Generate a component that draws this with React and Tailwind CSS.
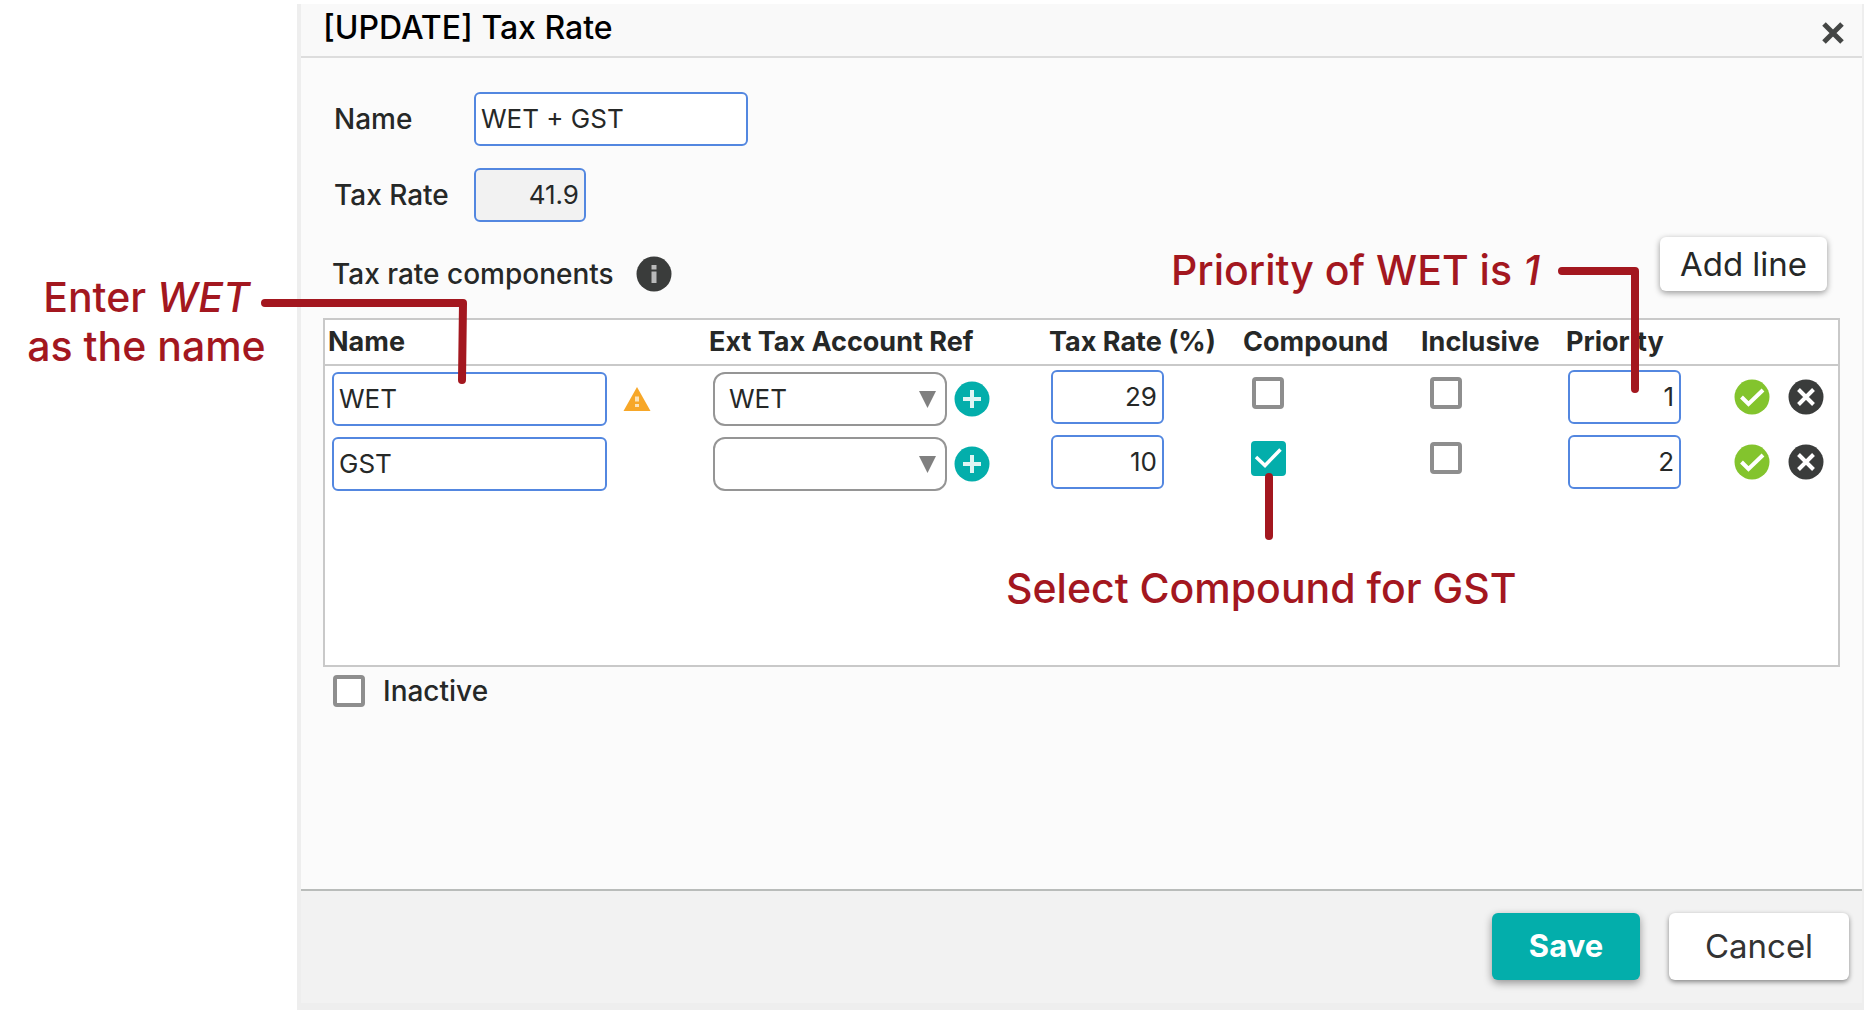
import { useState } from 'react';

const initialLines = [
  { id: 1, name: 'WET', warning: true, account: 'WET', rate: '29', compound: false, inclusive: false, priority: '1' },
  { id: 2, name: 'GST', warning: false, account: '', rate: '10', compound: true, inclusive: false, priority: '2' },
];

const inputClass = 'h-[54px] rounded-md border-2 border-[#5387e0] bg-white px-[5px] pb-[2px] text-[#262827] outline-none';

const WarningIcon = () => (
  <svg className="h-6 w-7" viewBox="0 0 28 24" role="img" aria-label="Warning">
    <path d="M14 0 27.500 24H.5z" fill="#f7a728" />
    <path d="M14 9.500v5M14 17v3" stroke="#fce3b8" strokeWidth="4" />
  </svg>
);

const InfoIcon = () => (
  <svg className="size-9" viewBox="0 0 36 36" role="img" aria-label="Info">
    <circle cx="18" cy="18" r="17.500" fill="#3a3c3b" />
    <path d="M18 9v4.500M18 15.500v11.500" stroke="#b9baba" strokeWidth="5" />
  </svg>
);

const PlusIcon = () => (
  <svg className="size-9" viewBox="0 0 36 36" aria-hidden="true">
    <circle cx="18" cy="18" r="17.500" fill="#03aeab" />
    <path d="M18 9v18M9 18h18" stroke="#dff5f4" strokeWidth="4" />
  </svg>
);

const AcceptIcon = () => (
  <svg className="size-9" viewBox="0 0 36 36" aria-hidden="true">
    <circle cx="18" cy="18" r="17.500" fill="#83c42d" />
    <path d="m7.500 18 7 7L29 11" fill="none" stroke="#fff" strokeWidth="4" />
  </svg>
);

const RemoveIcon = () => (
  <svg className="size-9" viewBox="0 0 36 36" aria-hidden="true">
    <circle cx="18" cy="18" r="17.500" fill="#3a3c3b" />
    <path d="m10.500 10.500 15 15m0-15-15 15" stroke="#fff" strokeWidth="4" />
  </svg>
);

const Checkbox = ({ id, label, checked, onChange }) => (
  <span className="relative flex size-9 items-center justify-center">
    <input
      id={id}
      type="checkbox"
      aria-label={label}
      checked={checked}
      onChange={onChange}
      className="peer size-8 appearance-none rounded-sm border-4 border-[#8e8e8e] bg-white checked:size-[35px] checked:border-[#03aeab] checked:bg-[#03aeab]"
    />
    <svg className="pointer-events-none absolute hidden size-9 peer-checked:block" viewBox="0 0 36 36" aria-hidden="true">
      <path d="m6 17 9 8.500L30.500 9.500" fill="none" stroke="#fff" strokeWidth="3.500" />
    </svg>
  </span>
);

const AccountSelect = ({ label, value, onChange }) => (
  <span className="relative flex">
    <select
      aria-label={label}
      value={value}
      onChange={onChange}
      className="h-[54px] w-[234px] appearance-none rounded-xl border-2 border-[#959595] bg-white pl-[14px] text-[#262827] outline-none"
    >
      <option value=""></option>
      <option value="WET">WET</option>
    </select>
    <svg className="pointer-events-none absolute right-[11px] top-[19px] h-[17px] w-[17px]" viewBox="0 0 17 17" aria-hidden="true">
      <path d="M0 0h17L8.500 17z" fill="#808080" />
    </svg>
  </span>
);

// Callout text and the strokes that lead to the fields
const Callouts = () => (
  <div className="pointer-events-none absolute inset-0 text-[41px] leading-[49px] font-medium text-[#a3171f]">
    <p className="absolute left-[1171px] top-[246px] whitespace-nowrap">
      Priority of WET is <em>1</em>
    </p>
    <p className="absolute left-[1006px] top-[564px] whitespace-nowrap">Select Compound for GST</p>
    <svg className="absolute left-0 top-0 h-[600px] w-[1700px]" viewBox="0 0 1700 600" aria-hidden="true">
      <g fill="none" stroke="#a3171f" strokeWidth="8" strokeLinecap="round" strokeLinejoin="round">
        <path d="M265 303h198l-1 77" />
        <path d="M1562 271h73v118" />
        <path d="M1269 477v59" />
      </g>
    </svg>
  </div>
);

export default function App() {
  const [name, setName] = useState('WET + GST');
  const [inactive, setInactive] = useState(false);
  const [lines, setLines] = useState(initialLines);

  const update = (id, field, value) => {
    setLines(lines.map(line => (line.id === id ? { ...line, [field]: value } : line)));
  };

  const addLine = () => {
    setLines([
      ...lines,
      { id: Date.now(), name: '', warning: false, account: '', rate: '', compound: false, inclusive: false, priority: String(lines.length + 1) },
    ]);
  };

  return (
    <div className="relative flex min-h-screen bg-white pt-1 pr-3 pb-2 font-['Inter',sans-serif] text-[26px] leading-9 text-[#262827]">
      <aside className="w-[297px] shrink-0 pt-[269px] pr-1 text-center text-[41px] leading-[49px] font-medium text-[#a3171f]">
        <p>
          Enter <em>WET</em>
          <br />
          as the name
        </p>
      </aside>

      <main className="flex min-w-0 flex-1 flex-col border-r-2 border-b-[7px] border-l-4 border-[#eeeeee] bg-[#fbfbfb]">
        <header className="flex h-[54px] items-center justify-between border-b-2 border-[#dddddd] bg-[#f9f9f9] pr-[18px] pl-[22px]">
          <h1 className="pb-1 text-[32px] font-medium text-black">[UPDATE] Tax Rate</h1>
          <button type="button" aria-label="Close" className="pt-[6px]">
            <svg className="size-[22px]" viewBox="0 0 22 22" aria-hidden="true">
              <path d="m2 2 18 18m0-18L2 20" stroke="#444645" strokeWidth="5" />
            </svg>
          </button>
        </header>

        <section className="flex-1 px-[22px] pt-[34px]">
          <div className="flex flex-col gap-[22px] pl-[11px]">
            <div className="flex items-center">
              <label htmlFor="tax-name" className="w-[140px] text-[28px] font-medium">Name</label>
              <input
                id="tax-name"
                className={`${inputClass} w-[274px]`}
                value={name}
                onChange={e => setName(e.target.value)}
              />
            </div>
            <div className="flex items-center">
              <label htmlFor="tax-rate" className="w-[140px] text-[28px] font-medium">Tax Rate</label>
              <input
                id="tax-rate"
                className="h-[54px] w-28 rounded-md border-2 border-[#5387e0] bg-[#f2f2f2] px-[5px] pb-[2px] text-right outline-none"
                value="41.9"
                readOnly
              />
            </div>
          </div>

          <div className="mt-[15px] mb-[26px] flex items-end justify-between pr-[13px] pl-[9px]">
            <div className="flex items-center gap-[22px]">
              <h2 className="text-[28px] font-medium">Tax rate components</h2>
              <InfoIcon />
            </div>
            <button
              type="button"
              onClick={addLine}
              className="mb-px h-[54px] w-[167px] rounded-md bg-white text-[33px] shadow-[0_2px_6px_rgba(0,0,0,0.4)]"
            >
              Add line
            </button>
          </div>

          <div className="min-h-[349px] border-2 border-[#c9c9c9] bg-white">
            <table className="w-full table-fixed border-collapse">
              <colgroup>
                <col />
                <col className="w-[338px]" />
                <col className="w-[196px]" />
                <col className="w-[178px]" />
                <col className="w-[143px]" />
                <col className="w-[153px]" />
                <col className="w-[124px]" />
              </colgroup>
              <thead>
                <tr className="h-[45px] border-b-2 border-[#c9c9c9] text-left text-[27px] whitespace-nowrap">
                  <th className="pl-[3px] font-bold">Name</th>
                  <th className="pl-[3px] font-bold">Ext Tax Account Ref</th>
                  <th className="pl-[5px] font-bold">Tax Rate (%)</th>
                  <th className="pl-[3px] font-bold">Compound</th>
                  <th className="pl-[3px] font-bold">Inclusive</th>
                  <th className="pl-[5px] font-bold">Priority</th>
                  <th aria-label="Actions"></th>
                </tr>
              </thead>
              <tbody>
                {lines.map(line => (
                  <tr key={line.id} className="h-[66px] align-top">
                    <td className="pt-[6px] pl-[7px]">
                      <div className="flex items-center gap-4">
                        <input
                          aria-label="Name"
                          className={`${inputClass} w-[275px]`}
                          value={line.name}
                          onChange={e => update(line.id, 'name', e.target.value)}
                        />
                        {line.warning && <WarningIcon />}
                      </div>
                    </td>
                    <td className="pt-[6px] pl-[7px]">
                      <div className="flex items-center gap-[7px]">
                        <AccountSelect
                          label="Ext Tax Account Ref"
                          value={line.account}
                          onChange={e => update(line.id, 'account', e.target.value)}
                        />
                        <button type="button" aria-label="Add account"><PlusIcon /></button>
                      </div>
                    </td>
                    <td className="pt-1 pl-[7px]">
                      <input
                        aria-label="Tax Rate (%)"
                        className={`${inputClass} block w-[113px] text-right`}
                        value={line.rate}
                        onChange={e => update(line.id, 'rate', e.target.value)}
                      />
                    </td>
                    <td className="pt-[9px] pl-[10px]">
                      <Checkbox
                        label="Compound"
                        checked={line.compound}
                        onChange={e => update(line.id, 'compound', e.target.checked)}
                      />
                    </td>
                    <td className="pt-[9px] pl-[10px]">
                      <Checkbox
                        label="Inclusive"
                        checked={line.inclusive}
                        onChange={e => update(line.id, 'inclusive', e.target.checked)}
                      />
                    </td>
                    <td className="pt-1 pl-[7px]">
                      <input
                        aria-label="Priority"
                        className={`${inputClass} block w-[113px] text-right`}
                        value={line.priority}
                        onChange={e => update(line.id, 'priority', e.target.value)}
                      />
                    </td>
                    <td className="pt-[13px] pl-5">
                      <div className="flex gap-[18px]">
                        <button type="button" aria-label="Accept line"><AcceptIcon /></button>
                        <button
                          type="button"
                          aria-label="Remove line"
                          onClick={() => setLines(lines.filter(l => l.id !== line.id))}
                        >
                          <RemoveIcon />
                        </button>
                      </div>
                    </td>
                  </tr>
                ))}
              </tbody>
            </table>
          </div>

          <div className="mt-[6px] flex items-center gap-4 pl-2">
            <Checkbox id="inactive" checked={inactive} onChange={e => setInactive(e.target.checked)} />
            <label htmlFor="inactive" className="text-[28px] font-medium">Inactive</label>
          </div>
        </section>

        <footer className="flex justify-end gap-[29px] border-t-2 border-[#b9bcba] bg-[#f2f2f2] pt-[22px] pr-[13px] pb-[23px]">
          <button type="button" className="h-[67px] w-[148px] rounded-md bg-[#03aeab] pb-[2px] text-[31px] font-bold text-white shadow-[0_3px_8px_rgba(0,0,0,0.4)]">
            Save
          </button>
          <button type="button" className="h-[67px] w-[180px] rounded-md bg-white pb-[2px] text-[33px] text-[#333333] shadow-[0_2px_5px_rgba(0,0,0,0.45)]">
            Cancel
          </button>
        </footer>
      </main>

      <Callouts />
    </div>
  );
}
